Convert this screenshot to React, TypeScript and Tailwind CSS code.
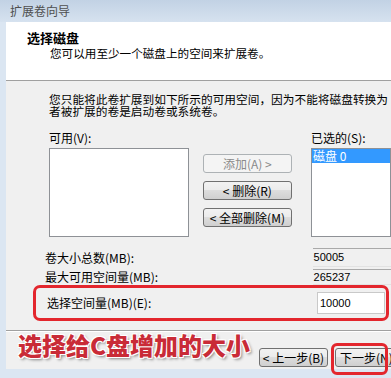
const cjk = "font-['Noto_Sans_CJK_SC','Noto_Sans',sans-serif]";

const btnBase =
  "flex h-[19px] items-center justify-center rounded-[3px] border text-[12px] leading-none";
const btnOn =
  "border-[#707070] bg-[linear-gradient(#f2f2f2,#ebebeb_50%,#dddddd_50%,#cfcfcf)] text-black";
const btnOff = "border-[#adb2b5] bg-[#f4f4f4] text-[#8a8a8a]";

function ListBox({ items }: { items: string[] }) {
  return (
    <div className="mt-[3px] h-[89px] w-full border border-[#8e9196] bg-white">
      {items.map((item) => (
        <div key={item} className="flex h-[14px] items-center bg-[#3399ff] pl-[1px] text-[12px] text-white">
          {item}
        </div>
      ))}
    </div>
  );
}

function ReadOnlyRow({ label, value, height }: { label: string; value: string; height: string }) {
  return (
    <div className="ml-[39px] flex items-center">
      <div className="w-[273px] text-[12px] leading-[14px]">{label}</div>
      <div
        className={`${height} flex w-[80px] items-center border-t border-b border-[#a9a9a9] border-b-[#e2e2e2] pl-[1px] font-['Liberation_Sans',sans-serif] text-[11px]`}
      >
        {value}
      </div>
    </div>
  );
}

export default function App() {
  return (
    <div className={`relative h-[378px] w-[391px] overflow-hidden bg-[#dbe6f2] text-black ${cjk}`}>
      <div className="flex h-[22px] items-center bg-[linear-gradient(#c2d2e4,#d6e2ef)] pl-[10px] text-[12px] text-[#4f4f4f]">
        扩展卷向导
      </div>

      <div className="ml-[6px] flex h-[347px] flex-col">
        <header className="h-[59px] border-b border-[#a0a0a0] bg-white pl-[21px] pt-[9px]">
          <div className="text-[13px] font-bold leading-[14px]">选择磁盘</div>
          <div className="ml-[23px] mt-[2px] text-[11.6px] leading-[13px]">您可以用至少一个磁盘上的空间来扩展卷。</div>
        </header>

        <section className="flex flex-1 flex-col bg-[#f0f0f0]">
          <p className="ml-[43px] mt-[12px] whitespace-nowrap text-[11.7px] leading-[12px]">
            您只能将此卷扩展到如下所示的可用空间，因为不能将磁盘转换为
            <br />
            者被扩展的卷是启动卷或系统卷。
          </p>

          <div className="ml-[43px] mt-[14px] flex">
            <div className="w-[144px]">
              <div className="text-[12px] leading-[14px]">可用(V):</div>
              <ListBox items={[]} />
            </div>
            <div className="ml-[14px] flex w-[92px] flex-col gap-[8px] pt-[23px]">
              <div className={`${btnBase} ${btnOff}`}>添加(A) &gt;</div>
              <div className={`${btnBase} ${btnOn}`}>&lt; 删除(R)</div>
              <div className={`${btnBase} ${btnOn}`}>&lt; 全部删除(M)</div>
            </div>
            <div className="ml-[19px] w-[80px] shrink-0">
              <div className="text-[12px] leading-[14px]">已选的(S):</div>
              <ListBox items={["磁盘 0"]} />
            </div>
          </div>

          <div className="mt-[11px] flex flex-col gap-[2px]">
            <ReadOnlyRow label="卷大小总数(MB):" value="50005" height="h-[19px]" />
            <ReadOnlyRow label="最大可用空间量(MB):" value="265237" height="h-[16px]" />
          </div>

          <div className="ml-[27px] flex h-[36px] w-[356px] items-center rounded-[7px] border-[3px] border-[#e3262d] pl-[11px]">
            <div className="w-[270px] text-[12px] leading-[14px]">选择空间量(MB)(E):</div>
            <div className="flex h-[22px] w-[68px] items-center border border-[#c9c9c9] bg-white pl-[2px] font-['Liberation_Sans',sans-serif] text-[11px]">
              10000
            </div>
          </div>

          <div className="mt-[9px] h-[2px] border-t border-b border-[#a0a0a0] border-b-white" />

          <div className="flex flex-1 items-start pl-[12px]">
            <div className="w-[241px] shrink-0 text-[24px] font-black leading-[26px] text-[#c92b37] [text-shadow:1px_1px_0_#fff,-1px_-1px_0_#fff,1px_-1px_0_#fff,-1px_1px_0_#fff,2px_2px_3px_rgba(0,0,0,0.45)]">
              选择给C盘增加的大小
            </div>
            <div className="mt-[16px] flex gap-[7px]">
              <div className={`${btnBase} ${btnOn} h-[17px] w-[69px]`}>&lt; 上一步(B)</div>
              <div className={`${btnBase} ${btnOn} h-[17px] w-[60px] shrink-0 justify-start pl-[4px]`}>下一步(N)</div>
            </div>
          </div>
        </section>
      </div>

      <div className="pointer-events-none absolute left-[331px] top-[343px] h-[32px] w-[57px] rounded-[6px] border-[3px] border-[#e3262d]" />
    </div>
  );
}
